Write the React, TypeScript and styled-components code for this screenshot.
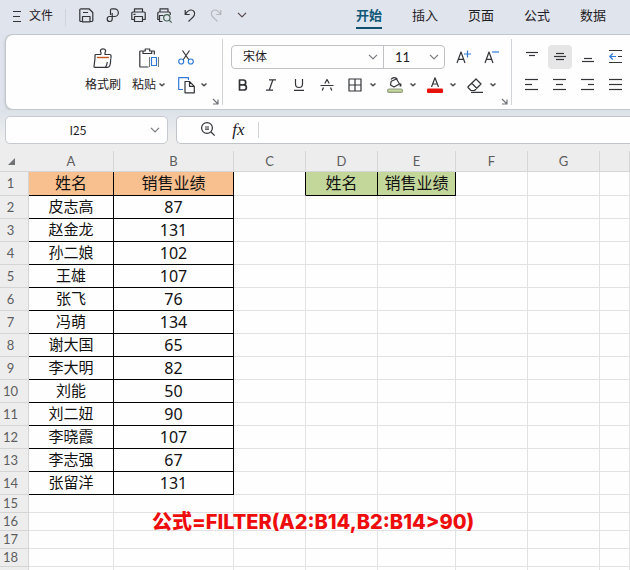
import React from "react";
import styled, { createGlobalStyle, css } from "styled-components";

const UI_FONT = '"Lato", "Noto Sans CJK SC", sans-serif';
const CELL_FONT = '"Noto Sans", "Noto Sans CJK SC", sans-serif';

const GlobalStyle = createGlobalStyle`
  * { box-sizing: border-box; }
  body { margin: 0; background: #fefefe; font-family: ${UI_FONT}; color: #1f2023; overflow: hidden; }
  button, input, select { font: inherit; color: inherit; background: none; border: 0; padding: 0; margin: 0; outline: none; }
  svg { display: block; flex: none; overflow: visible; }
`;

const Page = styled.div`
  height: 100vh;
  overflow: hidden;
  display: flex;
  flex-direction: column;
`;

const TopBar = styled.header`
  flex: none;
  height: 34px;
  padding: 0 10px;
  display: flex;
  align-items: center;
  background: #e0e4ec;
  overflow: hidden;
`;

const FileButton = styled.button`
  height: 30px;
  width: 55px;
  flex: none;
  display: flex;
  align-items: center;
  gap: 7px;
  padding-bottom: 3px;
  font-size: 12px;
  line-height: 16px;
  white-space: nowrap;
`;

const Divider = styled.span<{ $h: number }>`
  flex: none;
  width: 1px;
  height: ${(p) => p.$h}px;
  background: #d0d3d8;
`;

const QuickTools = styled.div`
  display: flex;
  flex: none;
  margin: -4px 0 0 7px;
`;

const QuickButton = styled.button`
  width: 26px;
  height: 30px;
  display: flex;
  align-items: center;
  justify-content: center;
`;

const Tabs = styled.nav`
  flex: none;
  display: flex;
  gap: 30px;
  margin-left: 101px;
`;

const Tab = styled.a<{ $active?: boolean }>`
  height: 24px;
  padding-top: 1px;
  font-size: 13px;
  line-height: 18px;
  color: ${(p) => (p.$active ? "#0f5878" : "#1f2023")};
  font-weight: ${(p) => (p.$active ? 700 : 400)};
  border-bottom: 2px solid ${(p) => (p.$active ? "#0f5070" : "transparent")};
  text-decoration: none;
  white-space: nowrap;
`;

const RibbonArea = styled.div`
  flex: none;
  padding-left: 5px;
  background: #dfe4ec;
  overflow: hidden;
`;

const Ribbon = styled.section`
  height: 76px;
  display: flex;
  background: #fefefe;
  border: 1px solid #c3c6cc;
  border-right: 0;
  border-radius: 8px 0 0 8px;
  box-shadow: 0 1px 3px #b9bec8;
`;

const Group = styled.div<{ $w: number }>`
  flex: none;
  width: ${(p) => p.$w}px;
  margin: 4px 0;
  position: relative;
  border-right: 1px solid #d0d3d7;
  display: flex;
`;

const AlignGroup = styled.div`
  flex: none;
  margin: 10px 0 0 6px;
  display: grid;
  grid-template-columns: repeat(4, 28px);
  grid-template-rows: 24px 24px;
  row-gap: 4px;
  justify-items: center;
`;

const Launcher = styled.button`
  position: absolute;
  right: 2px;
  bottom: 0;
  width: 8px;
  height: 8px;
`;

const BigButton = styled.button`
  width: 46px;
  height: 56px;
  display: flex;
  flex-direction: column;
  align-items: center;
  justify-content: space-between;
  padding: 9px 0 2px;
  font-size: 12px;
  line-height: 16px;
  white-space: nowrap;
`;

const BigLabel = styled.span`
  display: flex;
  align-items: center;
  gap: 2px;
`;

const ClipGroup = styled.div`
  display: flex;
  padding-left: 74px;
`;

const SmallStack = styled.div`
  display: flex;
  flex-direction: column;
  gap: 4px;
  margin-top: 6px;
`;

const ToolButton = styled.button<{ $active?: boolean }>`
  width: 28px;
  height: 24px;
  display: flex;
  align-items: center;
  justify-content: center;
  ${(p) =>
    p.$active &&
    css`
      width: 24px;
      background: #e6e6e6;
      border-radius: 4px;
    `}
`;

const SplitButton = styled.button`
  width: 40px;
  height: 24px;
  display: flex;
  align-items: center;
`;

const SplitIcon = styled.span`
  width: 28px;
  display: flex;
  justify-content: center;
`;

const FontGroup = styled.div`
  display: flex;
  flex-direction: column;
  gap: 4px;
  padding: 6px 0 0 6px;
`;

const FontRow = styled.div`
  height: 24px;
  display: flex;
  align-items: center;
`;

const Combos = styled.div`
  display: flex;
  height: 24px;
  margin: 0 4px 0 2px;
  border: 1px solid #bfc1c4;
  border-radius: 4px;
`;

const Combo = styled.label<{ $w: number }>`
  width: ${(p) => p.$w}px;
  display: flex;
  align-items: center;
  padding-right: 5px;
  & + & {
    border-left: 1px solid #bfc1c4;
  }
`;

const Select = styled.select<{ $size: number }>`
  appearance: none;
  flex: 1;
  min-width: 0;
  height: 22px;
  padding-left: 11px;
  font-size: ${(p) => p.$size}px;
  line-height: 22px;
`;

const FormulaRow = styled.div`
  flex: none;
  height: 41px;
  padding: 6px 0 8px 5px;
  display: flex;
  align-items: center;
  gap: 8px;
  background: linear-gradient(to bottom, #dce1e8 0, #e4e8ed 14px, #ededed 28px);
`;

const NameBox = styled.label`
  flex: none;
  width: 163px;
  height: 28px;
  display: flex;
  align-items: center;
  padding-right: 7px;
  background: #fefefe;
  border: 1px solid #c6cad0;
  border-radius: 5px;
`;

const NameInput = styled.input`
  flex: 1;
  min-width: 0;
  font-family: "Noto Sans CJK SC", sans-serif;
  font-size: 12px;
  line-height: 16px;
  text-align: center;
`;

const FormulaBar = styled.div`
  flex: 1;
  min-width: 0;
  height: 28px;
  display: flex;
  align-items: center;
  padding-left: 18px;
  background: #fefefe;
  border: 1px solid #c0c3c8;
  border-right: 0;
  border-radius: 5px 0 0 5px;
`;

const BarButton = styled.button`
  width: 26px;
  height: 24px;
  display: flex;
  align-items: center;
  justify-content: center;
`;

const FxButton = styled(BarButton)`
  width: 37px;
  padding-right: 2px;
  font-family: "Liberation Serif", serif;
  font-style: italic;
  font-size: 17px;
  line-height: 20px;
`;

const FormulaInput = styled.input`
  flex: 1;
  min-width: 0;
  padding: 0 6px;
  font-size: 13px;
`;

const SheetArea = styled.main`
  position: relative;
  flex: 1;
  min-height: 0;
  overflow: hidden;
  background: #fefefe;
`;

const Sheet = styled.table`
  width: 100%;
  table-layout: fixed;
  border-collapse: separate;
  border-spacing: 0;
`;

const Col = styled.col<{ $w?: number }>`
  width: ${(p) => (p.$w ? `${p.$w}px` : "auto")};
`;

const Row = styled.tr<{ $h: number }>`
  height: ${(p) => p.$h}px;
`;

const headCell = css`
  padding: 0;
  background: #ededed;
  color: #5d5d60;
  font-family: ${UI_FONT};
  font-weight: 400;
  border: 0 solid #d5d5d5;
`;

const ColumnHead = styled.th`
  ${headCell}
  font-size: 13px;
  line-height: 18px;
  border-width: 0 1px 1px 0;
`;

const Corner = styled.td`
  ${headCell}
  padding-left: 8px;
  border-width: 0 0 1px 0;
`;

const RowHead = styled.th`
  ${headCell}
  padding: 0 7px 1px 0;
  font-size: 13px;
  line-height: 14px;
  border-width: 0 1px 1px 0;
`;

const Cell = styled.td<{ $fill?: string; $right?: boolean; $bottom?: boolean; $large?: boolean }>`
  padding: 0 0 ${(p) => (p.$large ? 0 : 2)}px;
  overflow: hidden;
  white-space: nowrap;
  text-align: center;
  font-family: ${CELL_FONT};
  font-size: ${(p) => (p.$large ? 16 : 15)}px;
  line-height: 15px;
  color: #111;
  background: ${(p) => p.$fill ?? "transparent"};
  border: 0 solid #e2e2e2;
  border-width: 0 1px 1px 0;
  border-right-color: ${(p) => (p.$right ? "#000" : "#e2e2e2")};
  border-bottom-color: ${(p) => (p.$bottom ? "#000" : "#e2e2e2")};
`;

const Callout = styled.p`
  position: absolute;
  left: 152px;
  top: 358px;
  margin: 0;
  font-family: "Inter", "Noto Sans CJK SC", sans-serif;
  font-weight: 800;
  font-size: 20px;
  line-height: 26px;
  color: #ee0d0d;
  white-space: nowrap;
`;

/* ---------- icons ---------- */

type IconProps = { w: number; h: number; children: React.ReactNode; color?: string; sw?: number };
const Icon = ({ w, h, children, color = "#333438", sw = 1.2 }: IconProps) => (
  <svg width={w} height={h} viewBox={`0 0 ${w} ${h}`} fill="none" stroke={color} strokeWidth={sw} strokeLinejoin="round" aria-hidden="true">
    {children}
  </svg>
);

const Caret = () => (
  <Icon w={8} h={6} sw={1.5} color="#4a4b4f">
    <path d="M1.500 1.500 4 3.800l2.500-2.300" />
  </Icon>
);
const Chevron = ({ color = "#77797d" }: { color?: string }) => (
  <Icon w={10} h={6} color={color}>
    <path d="M1 .8 5 4.800 9 .8" />
  </Icon>
);
const MenuIcon = () => (
  <Icon w={12} h={12}>
    <path d="M3 1.500h8M3 6.500h7M3 11.500h8" />
  </Icon>
);
const SaveIcon = () => (
  <Icon w={15} h={15}>
    <path d="M3.500 13.500H2A1 1 0 0 1 .8 12.500V2A1.200 1.200 0 0 1 2 .8h8L13.800 4.500v8a1 1 0 0 1-1 1H11M3.500 13.800V8.500h7.500v5.300zM4 4.500h5" />
  </Icon>
);
const LinkIcon = () => (
  <Icon w={13} h={15}>
    <path d="M4.500 7V2.200A1.400 1.400 0 0 1 6 .8h2.500a3.600 3.600 0 0 1 0 7.700H3.500a2.500 2.500 0 1 0 2.700 2.500V5" />
  </Icon>
);
const PrintIcon = () => (
  <Icon w={15} h={15}>
    <path d="M3.500 4V.8h8V4M3.500 11.500H.8V5.200A1.200 1.200 0 0 1 2 4h11a1.200 1.200 0 0 1 1.200 1.200v6.300h-2.700M3.500 8.500h8v5h-8zM2.500 6.300h2" />
  </Icon>
);
const PreviewIcon = () => (
  <Icon w={15} h={15}>
    <path d="M3 4V.8h8V4M2.500 11.500H.8V5.200A1.200 1.200 0 0 1 2 4h10a1.200 1.200 0 0 1 1.200 1.200V7M5.500 13.500h-3v-6h4" />
    <circle cx="9.800" cy="9.800" r="3.200" stroke="#466355" />
    <path d="m12.200 12.200 2.500 2.500" stroke="#466355" />
  </Icon>
);
const UndoIcon = ({ color }: { color?: string }) => (
  <Icon w={12} h={13} color={color}>
    <path d="M1.200 1v4.500h4.500M1.500 5.300C3 2.600 5 1 7 1a3.600 3.600 0 0 1 3.300 5.200C9.500 8 7 10 4.500 12.500" />
  </Icon>
);
const RedoIcon = () => (
  <Icon w={12} h={13} color="#b3b7bc">
    <path d="M10.800 1v4.500H6.300M10.500 5.300C9 2.600 7 1 5 1a3.600 3.600 0 0 0-3.300 5.200C2.500 8 5 10 7.500 12.500" />
  </Icon>
);
const BrushIcon = () => (
  <Icon w={20} h={20}>
    <path d="M8 6.500V4.500C7 3.500 7 .8 10 .8s3 2.700 2 3.700v2h5a1 1 0 0 1 1 1v3M8 6.500H3a1 1 0 0 0-1 1v3L1 18.500a.7.700 0 0 0 .7.800h13c2 0 3-4 3-8.500M12.500 19c1-1.200 1.600-3 1.800-5" />
    <path d="M4 9.500h12" stroke="#c2561e" strokeWidth="1.400" />
  </Icon>
);
const PasteIcon = () => (
  <Icon w={20} h={20}>
    <path d="M4 3H1.500a.7.700 0 0 0-.7.700v14.600a.7.700 0 0 0 .7.700h8M12.500 3h2.800v3.500M4 5.500V3h2.200V1h4.500v2h2v2.500z" />
    <path d="M10.500 9v10M19.500 9v10" strokeWidth="1" stroke="#77797d" />
    <path d="M12.500 9.500h5v8h-5z" stroke="#2f7ad8" />
  </Icon>
);
const ScissorsIcon = () => (
  <Icon w={16} h={15}>
    <path d="m4.500.5 6.500 9.500M11.500.5 5 10" />
    <circle cx="3.200" cy="11.500" r="2.500" stroke="#2f7ad8" />
    <circle cx="12.800" cy="11.500" r="2.500" stroke="#2f7ad8" />
  </Icon>
);
const CopyIcon = () => (
  <Icon w={17} h={17}>
    <path d="M5 12.500H.700V.700h9.800V3" stroke="#2f7ad8" />
    <path d="M7 4.500h4.500l4.800 4.800v6.500H7zM11.500 4.500v4.800h4.800" />
  </Icon>
);
const LaunchIcon = () => (
  <Icon w={7} h={7} color="#707478">
    <path d="m1 1 4.500 4.500M6 1.500V6H1" />
  </Icon>
);
const BoldIcon = () => (
  <Icon w={12} h={12} sw={1.700}>
    <path d="M2.500 1h3.800a2.400 2.400 0 0 1 0 4.800H2.500zM2.500 5.800h4.300a2.600 2.600 0 0 1 0 5.200H2.500z" />
  </Icon>
);
const ItalicIcon = () => (
  <Icon w={12} h={12}>
    <path d="M4 .8h7M1 11.200h7M7.800 1l-3.500 10" />
  </Icon>
);
const UnderlineIcon = () => (
  <Icon w={12} h={12}>
    <path d="M2.500 0v5a3.500 3.500 0 0 0 7 0V0M1 11.400h10" />
  </Icon>
);
const StrikeIcon = () => (
  <Icon w={14} h={12}>
    <path d="M.5 6.500h13M4.800 4.500 7 .500l2.200 4M3.500 8.500 2.200 11.500M10.500 8.500l1.300 3" />
  </Icon>
);
const BorderIcon = () => (
  <Icon w={14} h={14}>
    <path d="M1 1h12v12H1zM7 1v12M1 7h12" />
  </Icon>
);
const FillIcon = () => (
  <Icon w={16} h={16}>
    <path d="M4.200 4.200 9.500 2l3 5-5.500 3-3.500-2zM4 2.500C5.500 0 9 0 10.500 2.500" />
    <path d="M13.500 6.500v3" strokeWidth="1.800" />
    <rect x=".6" y="12" width="14.800" height="3.400" rx="1.500" fill="#c4d79b" stroke="#929b82" />
  </Icon>
);
const FontColorIcon = () => (
  <Icon w={16} h={16}>
    <path d="M4.500 10 8 .8l3.500 9.200M5.800 7h4.400" />
    <rect x="0" y="11.500" width="16" height="4.500" rx="1" fill="#e8120c" stroke="none" />
  </Icon>
);
const EraserIcon = () => (
  <Icon w={16} h={15}>
    <path d="M9 1 14 6l-6.500 6.500H4L1 9.500V8.800zM4.500 5l5.500 5.500M4 14.300h12" />
  </Icon>
);
const FontSizeIcon = ({ grow }: { grow?: boolean }) => (
  <Icon w={15} h={14}>
    <path d="M1 13 5 2l4 11M2.500 9.300h5" />
    <path d={grow ? "M8 4h7M11.500.5v7" : "M8 2h7"} stroke="#2f7ad8" />
  </Icon>
);
const Lines = ({ rows }: { rows: [number, number, number][] }) => (
  <Icon w={14} h={14} sw={1.200}>
    {rows.map(([y, a, b]) => (
      <path key={y} d={`M${a} ${y + 0.5}H${b}`} />
    ))}
  </Icon>
);
const IndentIcon = () => (
  <Icon w={14} h={14}>
    <path d="M0 .5h13M0 12.500h13M9 6.500h4" />
    <path d="M.8 6.500H7M3.800 3.500l-3 3 3 3" stroke="#2f7ad8" />
  </Icon>
);
const ZoomOutIcon = () => (
  <Icon w={15} h={15}>
    <circle cx="6" cy="6" r="5.400" />
    <path d="M4 5h4M4 7.200h4M10 10l3.700 3.700" />
  </Icon>
);

/* ---------- data ---------- */

const tabs = ["开始", "插入", "页面", "公式", "数据"];
const columns: [string, number | undefined][] = [
  ["A", 85], ["B", 120], ["C", 72], ["D", 72], ["E", 78], ["F", 72], ["G", 72], ["", undefined],
];
const people: [string, number][] = [
  ["皮志高", 87], ["赵金龙", 131], ["孙二娘", 102], ["王雄", 107], ["张飞", 76], ["冯萌", 134], ["谢大国", 65],
  ["李大明", 82], ["刘能", 50], ["刘二妞", 90], ["李晓霞", 107], ["李志强", 67], ["张留洋", 131],
];
const emptyRows = ["15", "16", "17", "18", ""];
const ORANGE = "#f8bf8f";
const GREEN = "#c4d79b";

const Blanks = ({ n }: { n: number }) => (
  <>
    {Array.from({ length: n }, (_, i) => (
      <Cell key={i} />
    ))}
  </>
);

const quick: [string, React.ReactNode][] = [
  ["保存", <SaveIcon />], ["输出", <LinkIcon />], ["打印", <PrintIcon />], ["打印预览", <PreviewIcon />],
  ["撤销", <UndoIcon />], ["恢复", <RedoIcon />], ["更多", <Chevron color="#50474a" />],
];
const alignments: [string, React.ReactNode][] = [
  ["顶端对齐", <Lines rows={[[2, 1, 13], [5, 4, 10]]} />],
  ["垂直居中", <Lines rows={[[3, 3, 11], [6, 1, 13], [9, 3, 11]]} />],
  ["底端对齐", <Lines rows={[[8, 3, 11], [11, 1, 13]]} />],
  ["减少缩进", <IndentIcon />],
  ["左对齐", <Lines rows={[[1, 0, 13], [6, 0, 7], [11, 0, 13]]} />],
  ["水平居中", <Lines rows={[[1, 0, 13], [6, 3, 10], [11, 0, 13]]} />],
  ["右对齐", <Lines rows={[[1, 0, 13], [6, 7, 13], [11, 0, 13]]} />],
  ["两端对齐", <Lines rows={[[1, 0, 13], [6, 0, 13], [11, 0, 13]]} />],
];
const splits: [string, React.ReactNode][] = [
  ["边框", <BorderIcon />], ["填充颜色", <FillIcon />], ["字体颜色", <FontColorIcon />], ["清除", <EraserIcon />],
];

export default function App() {
  return (
    <Page>
      <GlobalStyle />
      <TopBar>
        <FileButton>
          <MenuIcon />
          文件
        </FileButton>
        <Divider $h={17} />
        <QuickTools>
          {quick.map(([name, icon]) => (
            <QuickButton key={name} aria-label={name}>{icon}</QuickButton>
          ))}
        </QuickTools>
        <Tabs>
          {tabs.map((t, i) => (
            <Tab key={t} href="#" $active={i === 0}>{t}</Tab>
          ))}
        </Tabs>
      </TopBar>

      <RibbonArea>
        <Ribbon>
          <Group $w={217}>
            <ClipGroup>
              <BigButton>
                <BrushIcon />
                <BigLabel>格式刷</BigLabel>
              </BigButton>
              <BigButton>
                <PasteIcon />
                <BigLabel>粘贴<Caret /></BigLabel>
              </BigButton>
              <SmallStack>
                <ToolButton aria-label="剪切"><ScissorsIcon /></ToolButton>
                <SplitButton aria-label="复制"><SplitIcon><CopyIcon /></SplitIcon><Caret /></SplitButton>
              </SmallStack>
            </ClipGroup>
            <Launcher aria-label="剪贴板设置"><LaunchIcon /></Launcher>
          </Group>
          <Group $w={289}>
            <FontGroup>
              <FontRow>
                <Combos>
                  <Combo $w={151}>
                    <Select $size={12} aria-label="字体"><option>宋体</option></Select>
                    <Chevron />
                  </Combo>
                  <Combo $w={61}>
                    <Select $size={13} aria-label="字号"><option>11</option></Select>
                    <Chevron />
                  </Combo>
                </Combos>
                <ToolButton aria-label="增大字号"><FontSizeIcon grow /></ToolButton>
                <ToolButton aria-label="减小字号"><FontSizeIcon /></ToolButton>
              </FontRow>
              <FontRow>
                <ToolButton aria-label="加粗"><BoldIcon /></ToolButton>
                <ToolButton aria-label="倾斜"><ItalicIcon /></ToolButton>
                <ToolButton aria-label="下划线"><UnderlineIcon /></ToolButton>
                <ToolButton aria-label="删除线"><StrikeIcon /></ToolButton>
                {splits.map(([name, icon]) => (
                  <SplitButton key={name} aria-label={name}><SplitIcon>{icon}</SplitIcon><Caret /></SplitButton>
                ))}
              </FontRow>
            </FontGroup>
            <Launcher aria-label="字体设置"><LaunchIcon /></Launcher>
          </Group>
          <AlignGroup>
            {alignments.map(([name, icon], i) => (
              <ToolButton key={name} aria-label={name} $active={i === 1}>{icon}</ToolButton>
            ))}
          </AlignGroup>
        </Ribbon>
      </RibbonArea>

      <FormulaRow>
        <NameBox>
          <NameInput aria-label="名称框" defaultValue="I25" />
          <Chevron />
        </NameBox>
        <FormulaBar>
          <BarButton aria-label="缩小"><ZoomOutIcon /></BarButton>
          <FxButton aria-label="插入函数">fx</FxButton>
          <Divider $h={16} />
          <FormulaInput aria-label="编辑栏" />
        </FormulaBar>
      </FormulaRow>

      <SheetArea>
        <Sheet>
          <colgroup>
            <Col $w={29} />
            {columns.map(([, w], i) => (
              <Col key={i} $w={w} />
            ))}
          </colgroup>
          <thead>
            <Row $h={21}>
              <Corner>
                <svg width="7" height="7" viewBox="0 0 7 7" aria-hidden="true">
                  <path d="M7 0v7H0z" fill="#707174" />
                </svg>
              </Corner>
              {columns.map(([name], i) => (
                <ColumnHead key={i} scope="col">{name}</ColumnHead>
              ))}
            </Row>
          </thead>
          <tbody>
            <Row $h={24}>
              <RowHead scope="row">1</RowHead>
              <Cell $large $fill={ORANGE} $right $bottom>姓名</Cell>
              <Cell $large $fill={ORANGE} $right $bottom>销售业绩</Cell>
              <Cell $right />
              <Cell $large $fill={GREEN} $right $bottom>姓名</Cell>
              <Cell $large $fill={GREEN} $right $bottom>销售业绩</Cell>
              <Blanks n={3} />
            </Row>
            {people.map(([name, score], i) => (
              <Row key={name} $h={23}>
                <RowHead scope="row">{i + 2}</RowHead>
                <Cell $right $bottom>{name}</Cell>
                <Cell $large $right $bottom>{score}</Cell>
                <Blanks n={6} />
              </Row>
            ))}
            {emptyRows.map((n) => (
              <Row key={n} $h={18}>
                <RowHead scope="row">{n}</RowHead>
                <Blanks n={8} />
              </Row>
            ))}
          </tbody>
        </Sheet>
        <Callout>公式=FILTER(A2:B14,B2:B14&gt;90)</Callout>
      </SheetArea>
    </Page>
  );
}
